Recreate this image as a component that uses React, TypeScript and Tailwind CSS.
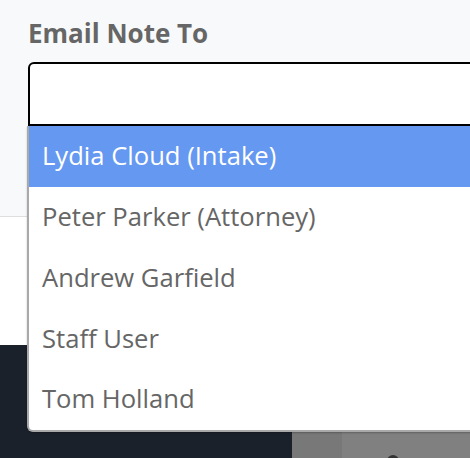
import React from "react";

const items = [
  "Lydia Cloud (Intake)",
  "Peter Parker (Attorney)",
  "Andrew Garfield",
  "Staff User",
  "Tom Holland",
];

export default function App() {
  return (
    <div
      className="relative w-[470px] h-[458px] overflow-hidden bg-white"
      style={{ fontFamily: '"Open Sans", "Noto Sans", sans-serif' }}
    >
      <div className="h-[217px] bg-[#f8f9fa] border-b border-[#dedede] pl-[28px] pt-[15px]">
        <div className="text-[26px] leading-[36px] font-bold text-[#666666]">Email Note To</div>
        <div className="mt-[11px] w-[600px] h-[64px] bg-white border-2 border-black rounded-tl-[6px]" />
      </div>
      <div className="h-[128px] bg-white" />
      <div className="flex h-[113px]">
        <div className="w-[292px] bg-[#1b212a]" />
        <div className="w-[50px] bg-[#787878]" />
        <div className="relative flex-1 bg-[#808080]">
          <div className="absolute left-[45px] top-[110px] w-[12px] h-[12px] rounded-full bg-[#333333]" />
        </div>
      </div>

      <div className="absolute left-[27px] top-[126px] w-[600px] h-[306px] bg-white border-l-2 border-b-2 border-[#a9a9a9] rounded-bl-[6px] shadow-[0_1px_2px_rgba(0,0,0,0.25)] flex flex-col">
        {items.map((it, i) => (
          <div
            key={it}
            className={
              i === 0
                ? "h-[61px] flex items-center pl-[13px] text-[25.6px] bg-[#6598f1] text-white"
                : "h-[61px] flex items-center pl-[13px] text-[25.6px] text-[#666666]"
            }
          >
            {it}
          </div>
        ))}
      </div>
    </div>
  );
}
